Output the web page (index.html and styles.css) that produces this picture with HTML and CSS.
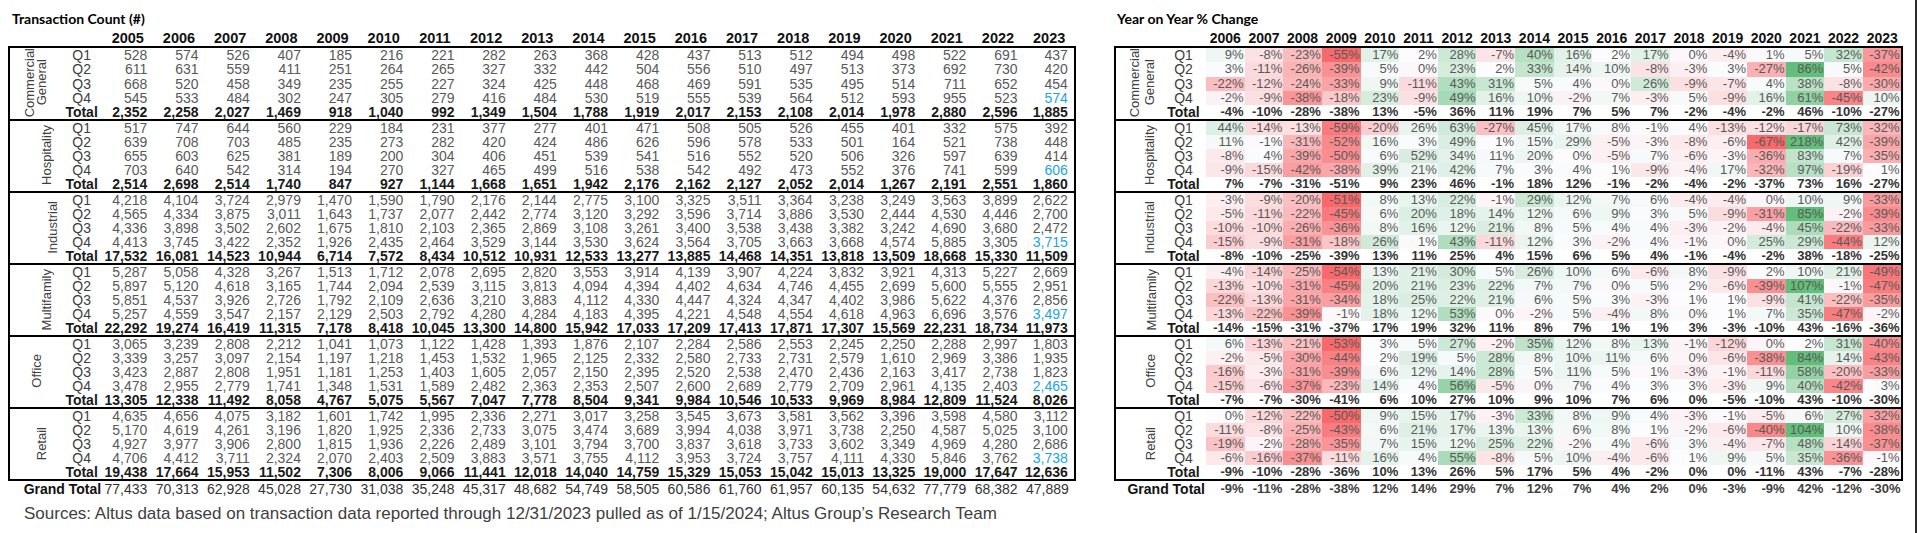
FILE: index.html
```html
<!DOCTYPE html>
<html lang="en">
<head>
<meta charset="utf-8">
<title>Transaction Count and Year on Year % Change</title>
<link rel="stylesheet" href="styles.css">
</head>
<body>
<div class="page">
  <section class="panel panel-count">
    <div class="title">Transaction Count (#)</div>
    <table class="tbl tbl-count" id="count"></table>
    <p class="source">Sources: Altus data based on transaction data reported through 12/31/2023 pulled as of 1/15/2024; Altus Group’s Research Team</p>
  </section>
  <section class="panel panel-yoy">
    <div class="title">Year on Year % Change</div>
    <table class="tbl tbl-yoy" id="yoy"></table>
  </section>
  <div class="edge"></div>
</div>
<script src="script.js"></script>
</body>
</html>
```

FILE: styles.css
```css
body {
  margin: 0;
  background: #fff;
}

.page {
  display: flex;
  width: 1918px;
  height: 533px;
  overflow: hidden;
}

.panel-count {
  margin-left: 8px;
  width: 1066px;
  flex: none;
}

.panel-yoy {
  margin-left: 40px;
  width: 787px;
  flex: none;
}

.edge {
  margin-left: 14px;
  width: 2px;
  background: #2b2b2b;
  flex: none;
}

.title {
  padding-top: 7px;
  height: 23px;
  line-height: 23px;
  font-family: Lato, "Liberation Sans", sans-serif;
  font-weight: bold;
  font-size: 14px;
  color: #000;
  white-space: nowrap;
}

.panel-count .title { padding-left: 4px; }
.panel-yoy .title { padding-left: 3px; }

.tbl {
  border-collapse: collapse;
  table-layout: fixed;
  width: 100%;
  font-family: "Liberation Sans Narrow", "Arial Narrow", "Liberation Sans", Arial, sans-serif;
  font-size: 14px;
  color: #595959;
}

.tbl td,
.tbl th {
  padding: 0;
  white-space: nowrap;
}

.tbl-count .c-sec { width: 52px; }
.tbl-count .c-q { width: 41.2px; }
.tbl-count .c-v { width: 51.2px; }

.tbl-yoy .c-sec { width: 46px; }
.tbl-yoy .c-q { width: 45px; }
.tbl-yoy .c-v { width: 38.65px; }

.tbl thead th {
  height: 16px;
  line-height: 16px;
  font-weight: bold;
  font-size: 14.5px;
  color: #111;
  text-align: center;
  vertical-align: bottom;
}

.tbl-yoy thead th { font-size: 14px; }

.tbl tbody {
  border: 2px solid #000;
}

.tbl tbody td {
  height: 14px;
  line-height: 14px;
}

.tbl .v { text-align: right; }
.tbl-count .v { padding-right: 6px; }
.tbl-yoy .v { padding-right: 1px; font-size: 13px; }

.tbl .q {
  text-align: center;
  color: #404040;
}

.tbl .tot td {
  font-weight: bold;
  color: #1a1a1a;
  vertical-align: bottom;
}

.tbl-yoy .tot .v { color: #333; }

.tbl .blue { color: #1ba4e4; }

.sec {
  text-align: left;
  vertical-align: middle;
}

.vl {
  display: inline-block;
  writing-mode: vertical-rl;
  transform: rotate(180deg);
  font-family: "Liberation Sans", Arial, sans-serif;
  font-size: 13px;
  line-height: 12px;
  color: #404040;
  text-align: center;
  white-space: nowrap;
}

.tbl-yoy .vl { line-height: 14.5px; }

.tbl-count .vl-cg { margin-left: 14px; }
.tbl-count .vl-hosp { margin-left: 31px; }
.tbl-count .vl-ind { margin-left: 37px; }
.tbl-count .vl-multi { margin-left: 31px; }
.tbl-count .vl-office { margin-left: 21px; }
.tbl-count .vl-retail { margin-left: 26px; }

.tbl-yoy .vl-cg { margin-left: 12px; }
.tbl-yoy .vl-hosp { margin-left: 27px; }
.tbl-yoy .vl-ind { margin-left: 27px; }
.tbl-yoy .vl-multi { margin-left: 29px; }
.tbl-yoy .vl-office { margin-left: 28px; }
.tbl-yoy .vl-retail { margin-left: 28px; }

.tbl .gt td {
  height: 16px;
  line-height: 16px;
}

.tbl .gt .gt-label {
  text-align: right;
  padding-right: 1px;
  font-weight: bold;
  font-size: 14px;
  color: #111;
}

.tbl-count .gt .v { color: #333; }
.tbl-yoy .gt .v { font-weight: bold; color: #404040; }

.source {
  margin: 7px 0 0 16px;
  font-family: "Liberation Sans", Arial, sans-serif;
  font-size: 17px;
  line-height: 20px;
  color: #404040;
  white-space: nowrap;
}
```

FILE: script.js
```js
const QL = ['Q1', 'Q2', 'Q3', 'Q4', 'Total'];

const SECTORS = [
  {
    key: 'cg', label: 'Commercial<br>General',
    count: `528 574 526 407 185 216 221 282 263 368 428 437 513 512 494 498 522 691 437
611 631 559 411 251 264 265 327 332 442 504 556 510 497 513 373 692 730 420
668 520 458 349 235 255 227 324 425 448 468 469 591 535 495 514 711 652 454
545 533 484 302 247 305 279 416 484 530 519 555 539 564 512 593 955 523 574
2,352 2,258 2,027 1,469 918 1,040 992 1,349 1,504 1,788 1,919 2,017 2,153 2,108 2,014 1,978 2,880 2,596 1,885`,
    yoy: `9% -8% -23% -55% 17% 2% 28% -7% 40% 16% 2% 17% 0% -4% 1% 5% 32% -37%
3% -11% -26% -39% 5% 0% 23% 2% 33% 14% 10% -8% -3% 3% -27% 86% 5% -42%
-22% -12% -24% -33% 9% -11% 43% 31% 5% 4% 0% 26% -9% -7% 4% 38% -8% -30%
-2% -9% -38% -18% 23% -9% 49% 16% 10% -2% 7% -3% 5% -9% 16% 61% -45% 10%
-4% -10% -28% -38% 13% -5% 36% 11% 19% 7% 5% 7% -2% -4% -2% 46% -10% -27%`
  },
  {
    key: 'hosp', label: 'Hospitality',
    count: `517 747 644 560 229 184 231 377 277 401 471 508 505 526 455 401 332 575 392
639 708 703 485 235 273 282 420 424 486 626 596 578 533 501 164 521 738 448
655 603 625 381 189 200 304 406 451 539 541 516 552 520 506 326 597 639 414
703 640 542 314 194 270 327 465 499 516 538 542 492 473 552 376 741 599 606
2,514 2,698 2,514 1,740 847 927 1,144 1,668 1,651 1,942 2,176 2,162 2,127 2,052 2,014 1,267 2,191 2,551 1,860`,
    yoy: `44% -14% -13% -59% -20% 26% 63% -27% 45% 17% 8% -1% 4% -13% -12% -17% 73% -32%
11% -1% -31% -52% 16% 3% 49% 1% 15% 29% -5% -3% -8% -6% -67% 218% 42% -39%
-8% 4% -39% -50% 6% 52% 34% 11% 20% 0% -5% 7% -6% -3% -36% 83% 7% -35%
-9% -15% -42% -38% 39% 21% 42% 7% 3% 4% 1% -9% -4% 17% -32% 97% -19% 1%
7% -7% -31% -51% 9% 23% 46% -1% 18% 12% -1% -2% -4% -2% -37% 73% 16% -27%`
  },
  {
    key: 'ind', label: 'Industrial',
    count: `4,218 4,104 3,724 2,979 1,470 1,590 1,790 2,176 2,144 2,775 3,100 3,325 3,511 3,364 3,238 3,249 3,563 3,899 2,622
4,565 4,334 3,875 3,011 1,643 1,737 2,077 2,442 2,774 3,120 3,292 3,596 3,714 3,886 3,530 2,444 4,530 4,446 2,700
4,336 3,898 3,502 2,602 1,675 1,810 2,103 2,365 2,869 3,108 3,261 3,400 3,538 3,438 3,382 3,242 4,690 3,680 2,472
4,413 3,745 3,422 2,352 1,926 2,435 2,464 3,529 3,144 3,530 3,624 3,564 3,705 3,663 3,668 4,574 5,885 3,305 3,715
17,532 16,081 14,523 10,944 6,714 7,572 8,434 10,512 10,931 12,533 13,277 13,885 14,468 14,351 13,818 13,509 18,668 15,330 11,509`,
    yoy: `-3% -9% -20% -51% 8% 13% 22% -1% 29% 12% 7% 6% -4% -4% 0% 10% 9% -33%
-5% -11% -22% -45% 6% 20% 18% 14% 12% 6% 9% 3% 5% -9% -31% 85% -2% -39%
-10% -10% -26% -36% 8% 16% 12% 21% 8% 5% 4% 4% -3% -2% -4% 45% -22% -33%
-15% -9% -31% -18% 26% 1% 43% -11% 12% 3% -2% 4% -1% 0% 25% 29% -44% 12%
-8% -10% -25% -39% 13% 11% 25% 4% 15% 6% 5% 4% -1% -4% -2% 38% -18% -25%`
  },
  {
    key: 'multi', label: 'Multifamily',
    count: `5,287 5,058 4,328 3,267 1,513 1,712 2,078 2,695 2,820 3,553 3,914 4,139 3,907 4,224 3,832 3,921 4,313 5,227 2,669
5,897 5,120 4,618 3,165 1,744 2,094 2,539 3,115 3,813 4,094 4,394 4,402 4,634 4,746 4,455 2,699 5,600 5,555 2,951
5,851 4,537 3,926 2,726 1,792 2,109 2,636 3,210 3,883 4,112 4,330 4,447 4,324 4,347 4,402 3,986 5,622 4,376 2,856
5,257 4,559 3,547 2,157 2,129 2,503 2,792 4,280 4,284 4,183 4,395 4,221 4,548 4,554 4,618 4,963 6,696 3,576 3,497
22,292 19,274 16,419 11,315 7,178 8,418 10,045 13,300 14,800 15,942 17,033 17,209 17,413 17,871 17,307 15,569 22,231 18,734 11,973`,
    yoy: `-4% -14% -25% -54% 13% 21% 30% 5% 26% 10% 6% -6% 8% -9% 2% 10% 21% -49%
-13% -10% -31% -45% 20% 21% 23% 22% 7% 7% 0% 5% 2% -6% -39% 107% -1% -47%
-22% -13% -31% -34% 18% 25% 22% 21% 6% 5% 3% -3% 1% 1% -9% 41% -22% -35%
-13% -22% -39% -1% 18% 12% 53% 0% -2% 5% -4% 8% 0% 1% 7% 35% -47% -2%
-14% -15% -31% -37% 17% 19% 32% 11% 8% 7% 1% 1% 3% -3% -10% 43% -16% -36%`
  },
  {
    key: 'office', label: 'Office',
    count: `3,065 3,239 2,808 2,212 1,041 1,073 1,122 1,428 1,393 1,876 2,107 2,284 2,586 2,553 2,245 2,250 2,288 2,997 1,803
3,339 3,257 3,097 2,154 1,197 1,218 1,453 1,532 1,965 2,125 2,332 2,580 2,733 2,731 2,579 1,610 2,969 3,386 1,935
3,423 2,887 2,808 1,951 1,181 1,253 1,403 1,605 2,057 2,150 2,395 2,520 2,538 2,470 2,436 2,163 3,417 2,738 1,823
3,478 2,955 2,779 1,741 1,348 1,531 1,589 2,482 2,363 2,353 2,507 2,600 2,689 2,779 2,709 2,961 4,135 2,403 2,465
13,305 12,338 11,492 8,058 4,767 5,075 5,567 7,047 7,778 8,504 9,341 9,984 10,546 10,533 9,969 8,984 12,809 11,524 8,026`,
    yoy: `6% -13% -21% -53% 3% 5% 27% -2% 35% 12% 8% 13% -1% -12% 0% 2% 31% -40%
-2% -5% -30% -44% 2% 19% 5% 28% 8% 10% 11% 6% 0% -6% -38% 84% 14% -43%
-16% -3% -31% -39% 6% 12% 14% 28% 5% 11% 5% 1% -3% -1% -11% 58% -20% -33%
-15% -6% -37% -23% 14% 4% 56% -5% 0% 7% 4% 3% 3% -3% 9% 40% -42% 3%
-7% -7% -30% -41% 6% 10% 27% 10% 9% 10% 7% 6% 0% -5% -10% 43% -10% -30%`
  },
  {
    key: 'retail', label: 'Retail',
    count: `4,635 4,656 4,075 3,182 1,601 1,742 1,995 2,336 2,271 3,017 3,258 3,545 3,673 3,581 3,562 3,396 3,598 4,580 3,112
5,170 4,619 4,261 3,196 1,820 1,925 2,336 2,733 3,075 3,474 3,689 3,994 4,038 3,971 3,738 2,250 4,587 5,025 3,100
4,927 3,977 3,906 2,800 1,815 1,936 2,226 2,489 3,101 3,794 3,700 3,837 3,618 3,733 3,602 3,349 4,969 4,280 2,686
4,706 4,412 3,711 2,324 2,070 2,403 2,509 3,883 3,571 3,755 4,112 3,953 3,724 3,757 4,111 4,330 5,846 3,762 3,738
19,438 17,664 15,953 11,502 7,306 8,006 9,066 11,441 12,018 14,040 14,759 15,329 15,053 15,042 15,013 13,325 19,000 17,647 12,636`,
    yoy: `0% -12% -22% -50% 9% 15% 17% -3% 33% 8% 9% 4% -3% -1% -5% 6% 27% -32%
-11% -8% -25% -43% 6% 21% 17% 13% 13% 6% 8% 1% -2% -6% -40% 104% 10% -38%
-19% -2% -28% -35% 7% 15% 12% 25% 22% -2% 4% -6% 3% -4% -7% 48% -14% -37%
-6% -16% -37% -11% 16% 4% 55% -8% 5% 10% -4% -6% 1% 9% 5% 35% -36% -1%
-9% -10% -28% -36% 10% 13% 26% 5% 17% 5% 4% -2% 0% 0% -11% 43% -7% -28%`
  }
];

const GT_COUNT = '77,433 70,313 62,928 45,028 27,730 31,038 35,248 45,317 48,682 54,749 58,505 60,586 61,760 61,957 60,135 54,632 77,779 68,382 47,889';
const GT_YOY = '-9% -11% -28% -38% 12% 14% 29% 7% 12% 7% 4% 2% 0% -3% -9% 42% -12% -30%';

const RED = [248, 105, 107];
const MID = [252, 252, 255];
const GREEN = [99, 190, 123];

function parseRows(s) {
  return s.trim().split('\n').map(l => l.trim().split(/\s+/));
}

function percentile(arr, p) {
  const a = [...arr].sort((x, y) => x - y);
  const r = p * (a.length - 1);
  const lo = Math.floor(r), hi = Math.ceil(r);
  return a[lo] + (a[hi] - a[lo]) * (r - lo);
}

function mix(c1, c2, t) {
  return 'rgb(' + c1.map((c, i) => Math.round(c + (c2[i] - c) * t)).join(',') + ')';
}

function years(from, to) {
  const out = [];
  for (let y = from; y <= to; y++) out.push(y);
  return out;
}

function build(tableId, yrs, field, gt, colored) {
  const t = document.getElementById(tableId);
  let h = '<colgroup><col class="c-sec"><col class="c-q">' + '<col class="c-v">'.repeat(yrs.length) + '</colgroup>';
  h += '<thead><tr><th colspan="2"></th>' + yrs.map(y => '<th>' + y + '</th>').join('') + '</tr></thead>';
  SECTORS.forEach(s => {
    const rows = parseRows(s[field]);
    let scale = null;
    if (colored) {
      const vals = rows.slice(0, 4).flat().map(parseFloat);
      scale = { min: Math.min(...vals), max: Math.max(...vals), mid: percentile(vals, 0.5) };
    }
    h += '<tbody>';
    rows.forEach((r, i) => {
      h += '<tr' + (i === 4 ? ' class="tot"' : '') + '>';
      if (i === 0) h += '<td class="sec" rowspan="5"><div class="vl vl-' + s.key + '">' + s.label + '</div></td>';
      h += '<td class="q">' + QL[i] + '</td>';
      r.forEach((v, j) => {
        let cls = 'v';
        if (!colored && i === 3 && j === r.length - 1) cls += ' blue';
        let style = '';
        if (colored && i < 4) {
          const n = parseFloat(v);
          let c;
          if (n <= scale.mid) c = mix(RED, MID, scale.mid === scale.min ? 1 : (n - scale.min) / (scale.mid - scale.min));
          else c = mix(MID, GREEN, (n - scale.mid) / (scale.max - scale.mid));
          style = ' style="background:' + c + '"';
        }
        h += '<td class="' + cls + '"' + style + '>' + v + '</td>';
      });
      h += '</tr>';
    });
    h += '</tbody>';
  });
  h += '<tfoot><tr class="gt"><td class="gt-label" colspan="2">Grand Total</td>' +
    gt.split(' ').map(v => '<td class="v">' + v + '</td>').join('') + '</tr></tfoot>';
  t.innerHTML = h;
}

build('count', years(2005, 2023), 'count', GT_COUNT, false);
build('yoy', years(2006, 2023), 'yoy', GT_YOY, true);
```
